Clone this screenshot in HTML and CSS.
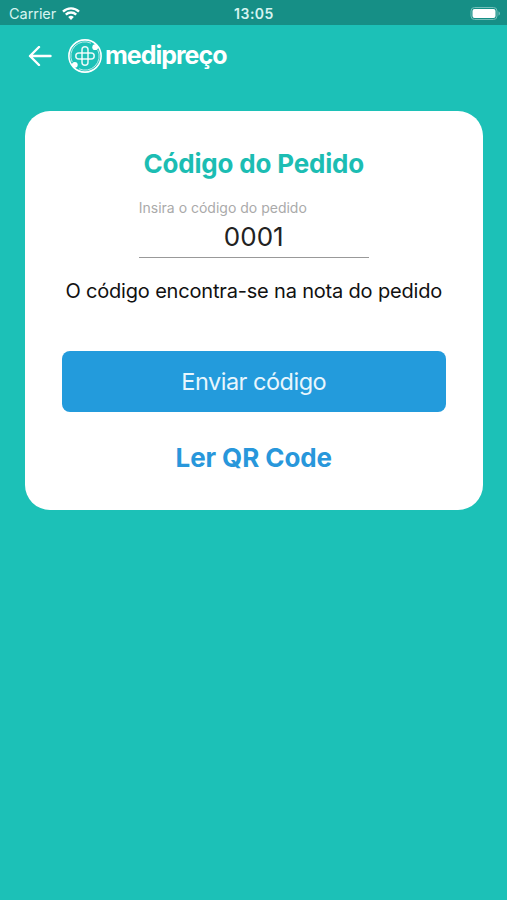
FILE: index.html
```html
<!DOCTYPE html>
<html lang="pt">
  <head>
    <meta charset="utf-8">
    <title>Código do Pedido</title>
    <link rel="stylesheet" href="styles.css">
  </head>
  <body>
    <div class="status-bar">
      <div class="carrier">
        <span>Carrier</span>
        <svg class="wifi" width="18" height="14" viewBox="0 0 18 14">
          <path d="M1 4.6a11.6 11.6 0 0 1 16 0M3.8 7.6a7.6 7.6 0 0 1 10.4 0" />
          <path class="wifi-dot" d="M9 13l-2.8-2.9a4 4 0 0 1 5.6 0z" />
        </svg>
      </div>
      <span class="clock">13:05</span>
      <svg class="battery" width="31" height="14" viewBox="0 0 31 14">
        <rect class="battery-case" x="1" y=".5" width="26" height="12" rx="3.5" />
        <rect class="battery-level" x="2.5" y="2" width="23" height="9" rx="2" />
        <path class="battery-tip" d="M28.5 4.3c2 .8 2 3.6 0 4.4z" />
      </svg>
    </div>

    <header>
      <a class="back" href="#" aria-label="Voltar">
        <svg width="24" height="20" viewBox="0 0 24 20">
          <path d="M22.5 10H2M11 1L2 10l9 9" />
        </svg>
      </a>
      <svg class="logo" width="36" height="36" viewBox="0 0 36 36">
        <circle class="ring" cx="18" cy="18" r="16.1" />
        <path class="ring-inner" d="M30.8 12A14.1 14.1 0 0 1 12 30.8M5.2 24A14.1 14.1 0 0 1 24 5.2" />
        <circle class="dot" cx="28.2" cy="9.2" r="2.9" />
        <circle class="dot" cx="7.8" cy="26.8" r="2.9" />
        <rect class="loop" x="15" y="8.8" width="6" height="18.4" rx="3" />
        <rect class="loop" x="8.8" y="15" width="18.4" height="6" rx="3" />
      </svg>
      <span class="brand">medipreço</span>
    </header>

    <main>
      <h1>Código do Pedido</h1>
      <form action="" method="get">
        <div class="field">
          <label for="code">Insira o código do pedido</label>
          <input type="text" id="code" value="0001" maxlength="4">
        </div>
        <p>O código encontra-se na nota do pedido</p>
        <input type="submit" value="Enviar código">
      </form>
      <a class="qr-link" href="#">Ler QR Code</a>
    </main>
  </body>
</html>
```

FILE: styles.css
```css
body {
  margin: 0;
  min-height: 900px;
  font: normal 16px Inter, "Liberation Sans", sans-serif;
  color: #111;
  background: #1cc1b7;
}

/* status bar */
.status-bar {
  display: grid;
  grid-template-columns: 1fr auto 1fr;
  align-items: center;
  height: 25px;
  padding: 2px 6px 0 9px;
  box-sizing: border-box;
  color: #d6f4f0;
  background: #168f86;
}

.carrier {
  display: flex;
  align-items: center;
  gap: 6px;
  font-size: 14.5px;
  letter-spacing: -.05px;
}

.wifi {
  fill: none;
  stroke: #fff;
  stroke-width: 2.4;
}

.wifi-dot {
  fill: #fff;
  stroke: none;
}

.clock {
  margin-right: 2px;
  font-size: 14px;
  font-weight: 600;
  letter-spacing: .5px;
}

.battery { justify-self: end; }

.battery-case {
  fill: none;
  stroke: #73bfb9;
}

.battery-level { fill: #fff; }

.battery-tip { fill: #73bfb9; }

/* top bar */
header {
  display: flex;
  align-items: center;
  height: 62px;
  padding-left: 28px;
}

.back {
  display: flex;
  margin-right: 15px;
}

.back svg {
  fill: none;
  stroke: #fff;
  stroke-width: 2.4;
  stroke-linecap: round;
  stroke-linejoin: round;
}

.ring, .ring-inner, .loop {
  fill: none;
  stroke: #fff;
}

.ring { stroke-width: 1.6; }

.ring-inner {
  stroke-width: 1;
  opacity: .7;
}

.loop {
  stroke-width: 1.5;
  opacity: .9;
}

.dot { fill: #fff; }

.brand {
  margin: 0 0 3px 2px;
  font-size: 25px;
  font-weight: 700;
  letter-spacing: -1px;
  color: #fff;
}

/* card */
main {
  display: flex;
  flex-direction: column;
  align-items: center;
  height: 399px;
  margin: 24px 24.5px 0 25px;
  padding: 37px 37px 0;
  border-radius: 25px;
  box-sizing: border-box;
  background: #fff;
}

h1 {
  margin: 0;
  font-size: 26px;
  line-height: 32px;
  font-weight: 700;
  letter-spacing: -.18px;
  color: #1cbdb3;
}

form {
  display: flex;
  flex-direction: column;
  align-items: center;
  width: 100%;
}

.field {
  width: 230px;
  margin-top: 19px;
  border-bottom: 1px solid #999;
}

label {
  display: block;
  font-size: 14px;
  line-height: 18px;
  color: #aaa;
}

input[type="text"] {
  display: block;
  width: 100%;
  height: 40px;
  padding: 0 0 2px;
  border: none;
  outline: none;
  box-sizing: border-box;
  font: normal 26px Inter, "Liberation Sans", sans-serif;
  text-align: center;
  color: #222;
  background: none;
}

p {
  margin: 20px 0 0;
  font-size: 20px;
  line-height: 26px;
  letter-spacing: -.18px;
  white-space: nowrap;
}

input[type="submit"] {
  width: 100%;
  height: 61px;
  margin-top: 47px;
  padding: 0;
  border: none;
  border-radius: 8px;
  font: normal 23.5px Inter, "Liberation Sans", sans-serif;
  letter-spacing: -.5px;
  color: #e8f6fd;
  background: #239bdc;
}

.qr-link {
  margin-top: 30px;
  font-size: 26px;
  line-height: 32px;
  font-weight: 700;
  letter-spacing: -.1px;
  text-decoration: none;
  color: #2897db;
}
```
